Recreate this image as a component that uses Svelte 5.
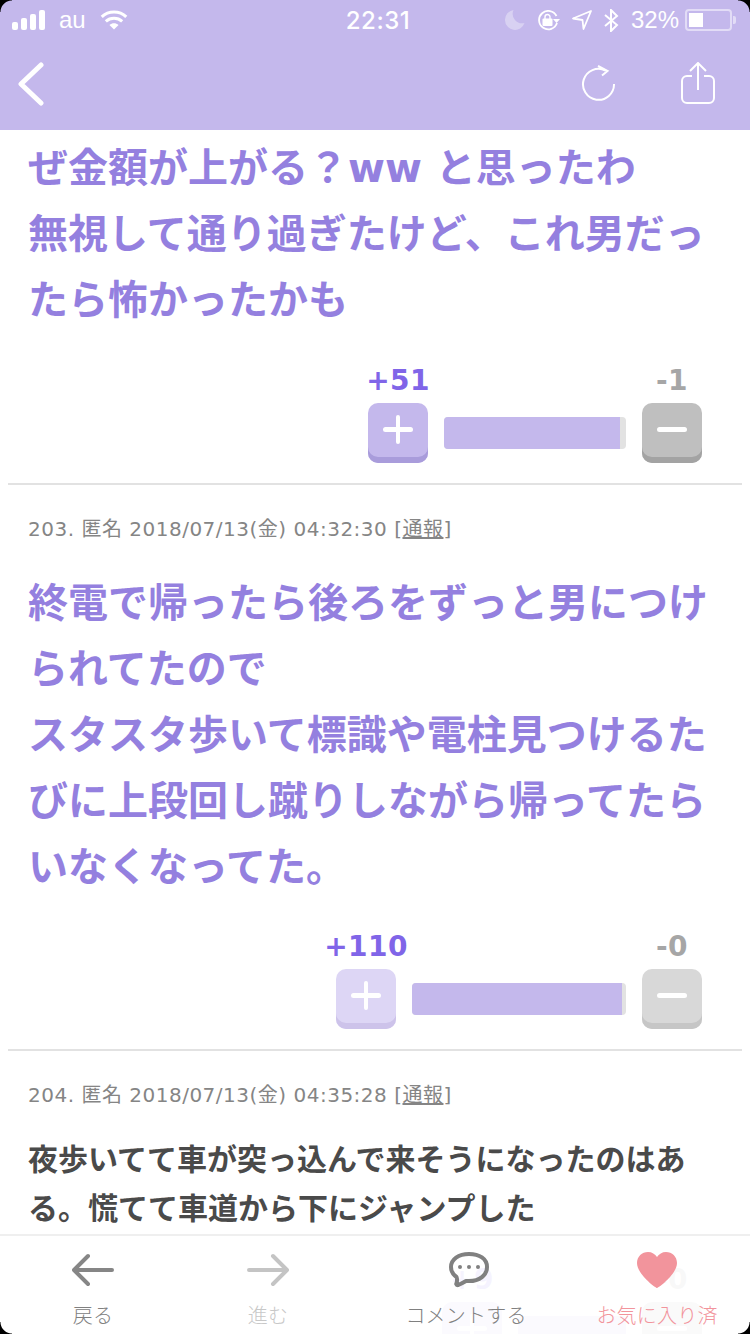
<script>
  const posts = [
    { meta: null, lines: ['ぜ金額が上がる？ww と思ったわ', '無視して通り過ぎたけど、これ男だっ', 'たら怖かったかも'], plus: 51, minus: 1, fill: 96.7, barWidth: 182, muted: false },
    { meta: '203. 匿名 2018/07/13(金) 04:32:30', lines: ['終電で帰ったら後ろをずっと男につけ', 'られてたので', 'スタスタ歩いて標識や電柱見つけるた', 'びに上段回し蹴りしながら帰ってたら', 'いなくなってた。'], plus: 110, minus: 0, fill: 98.2, barWidth: 214, muted: true }
  ];
</script>

<div class="screen">
  <header class="top">
    <div class="status">
      <div class="left">
        <svg class="signal" width="34" height="20" viewBox="0 0 34 20"><rect x="0" y="12" width="6" height="8" rx="2"/><rect x="9" y="8" width="6" height="12" rx="2"/><rect x="18" y="4" width="6" height="16" rx="2"/><rect x="27" y="0" width="6" height="20" rx="2"/></svg>
        <span class="carrier">au</span>
        <svg width="28" height="20" viewBox="0 0 30 22"><path d="M1.500 7.500C9 .5 21 .5 28.500 7.500M6 12.500C11 8 19 8 24 12.500" fill="none" stroke="#fff" stroke-width="3.400"/><path d="M10 16.500C13 14 17 14 20 16.500L15 21.500Z" fill="#fff"/></svg>
      </div>
      <span class="time">22:31</span>
      <div class="right">
        <svg width="20" height="20" viewBox="0 0 20 20"><path d="M8.500 0A10 10 0 1 0 19.500 13 9.500 9.500 0 0 1 8.500 0Z" fill="#fff" opacity=".35"/></svg>
        <svg width="23" height="21" viewBox="0 0 23 21"><path d="M19.500 6A9.200 9.200 0 1 0 20 13" fill="none" stroke="#fff" stroke-width="1.800"/><path d="M16 9h7l-3.500 4Z" fill="#fff"/><rect x="5.500" y="8.500" width="10" height="7.500" rx="1" fill="#fff"/><path d="M8 9V7a2.500 2.500 0 0 1 5 0v2" fill="none" stroke="#fff" stroke-width="1.400"/></svg>
        <svg width="20" height="20" viewBox="0 0 20 20"><path d="M19 1 1 8.500 10.500 10 11.500 19Z" fill="none" stroke="#fff" stroke-width="1.800" stroke-linejoin="round"/></svg>
        <svg width="15" height="23" viewBox="0 0 15 23"><path d="M1 6 13 16 7 22V1L13 7 1 17" fill="none" stroke="#fff" stroke-width="2"/></svg>
        <span class="battery-pct">32%</span>
        <div class="battery"><div class="cell"><div class="charge"></div></div><div class="nub"></div></div>
      </div>
    </div>
    <div class="nav">
      <svg class="back-icon" width="28" height="44" viewBox="0 0 28 44"><path d="M25 3 5 22 25 41" fill="none" stroke="#fff" stroke-width="5" stroke-linecap="round" stroke-linejoin="round"/></svg>
      <div class="nav-actions">
        <svg width="34" height="36" viewBox="0 0 34 36"><path d="M24.500 5.500A15.500 15.500 0 1 0 33 19" fill="none" stroke="#fff" stroke-width="2"/><path d="M17 1 26.500 6 21 10.500" fill="none" stroke="#fff" stroke-width="2"/></svg>
        <svg width="34" height="42" viewBox="0 0 34 42"><path d="M11 14H6a5 5 0 0 0-5 5v17a5 5 0 0 0 5 5h22a5 5 0 0 0 5-5V19a5 5 0 0 0-5-5h-5M17 28V2M9 9l8-8 8 8" fill="none" stroke="#fff" stroke-width="2"/></svg>
      </div>
    </div>
  </header>

  <main class="content">
    {#each posts as p}
      <article class="post">
        {#if p.meta}<p class="meta">{p.meta} [<u>通報</u>]</p>{/if}
        <div class="big">{#each p.lines as l}<div>{l}</div>{/each}</div>
        <div class="votes">
          <div class="col"><b class="plus-n">+{p.plus}</b><div class="btn plus" class:muted={p.muted}><i class="h"></i><i class="v"></i></div></div>
          <div class="bar" style="width:{p.barWidth}px"><div class="fill" style="width:{p.fill}%"></div></div>
          <div class="col"><b class="minus-n">-{p.minus}</b><div class="btn minus" class:muted={p.muted}><i class="h"></i></div></div>
        </div>
      </article>
    {/each}
    <article class="post">
      <p class="meta">204. 匿名 2018/07/13(金) 04:35:28 [<u>通報</u>]</p>
      <div class="small"><div>夜歩いてて車が突っ込んで来そうになったのはあ</div><div>る。慌てて車道から下にジャンプした</div></div>
      <div class="votes">
        <div class="col"><b class="plus-n">+9</b><div class="btn plus"><i class="h"></i><i class="v"></i></div></div>
        <div class="bar" style="width:108px"><div class="fill" style="width:100%"></div></div>
        <div class="col"><b class="minus-n">-0</b><div class="btn minus"><i class="h"></i></div></div>
      </div>
    </article>
  </main>

  <footer class="tabs">
    <div class="tab">
      <svg width="42" height="34" viewBox="0 0 42 34"><path d="M40 17H3M16 3 2 17 16 31" fill="none" stroke="#868686" stroke-width="4" stroke-linecap="round" stroke-linejoin="round"/></svg>
      <span>戻る</span>
    </div>
    <div class="tab fwd">
      <svg width="42" height="34" viewBox="0 0 42 34"><path d="M2 17H39M26 3 40 17 26 31" fill="none" stroke="#c4c4c4" stroke-width="4" stroke-linecap="round" stroke-linejoin="round"/></svg>
      <span>進む</span>
    </div>
    <div class="tab comment">
      <svg width="40" height="36" viewBox="0 0 40 36"><path d="M20 2C9.500 2 2 7.500 2 15c0 4 2 7.500 5.500 10 .8 2 .8 4.500-.3 7 .4 1 1 1.300 1.800 1 3-1 5.500-2.500 8-4 1 .1 2 .1 3 .1 10.500 0 18-6 18-14.100S30.500 2 20 2Z" fill="none" stroke="#808080" stroke-width="4" stroke-linejoin="round"/><circle cx="11" cy="15" r="2" fill="#808080"/><circle cx="20" cy="15" r="2" fill="#808080"/><circle cx="29" cy="15" r="2" fill="#808080"/></svg>
      <span>コメントする</span>
    </div>
    <div class="tab fav">
      <svg width="40" height="36" viewBox="0 0 40 36"><path d="M20 36C18.500 36 0 22 0 11 0 4.500 5 0 11 0c4 0 7 2 9 5 2-3 5-5 9-5 6 0 11 4.500 11 11C40 22 21.500 36 20 36Z" fill="#f2949c"/></svg>
      <span>お気に入り済</span>
    </div>
  </footer>

  <i class="corner tl"></i><i class="corner tr"></i><i class="corner bl"></i><i class="corner br"></i>
</div>

<style>
  :global(body) { margin: 0; background: #fff; }
  .screen { position: relative; width: 750px; height: 1334px; overflow: hidden; display: flex; flex-direction: column; background: #fff; font-family: "Liberation Sans", "Noto Sans CJK JP", sans-serif; }
  .top { flex: none; height: 130px; background: #c4b8ec; color: #fff; display: flex; flex-direction: column; }
  .status { height: 40px; display: flex; align-items: center; justify-content: space-between; padding: 0 14px 0 12px; position: relative; }
  .left, .right { display: flex; align-items: center; }
  .signal { fill: #fff; margin-right: 13px; }
  .carrier { font-size: 24px; margin-right: 14px; }
  .time { position: absolute; left: 6px; right: 0; text-align: center; font-size: 24px; font-weight: 500; font-family: "Inter", sans-serif; letter-spacing: .5px; }
  .right { gap: 12px; }
  .battery-pct { font-size: 24px; }
  .battery { display: flex; align-items: center; margin-left: -6px; }
  .cell { width: 47px; height: 22px; border: 2px solid rgba(255,255,255,.5); border-radius: 4px; padding: 2px; box-sizing: border-box; }
  .charge { width: 14px; height: 100%; background: #fff; }
  .nub { width: 3px; height: 8px; background: rgba(255,255,255,.5); margin-left: 1px; border-radius: 0 2px 2px 0; }
  .nav { flex: 1; display: flex; align-items: center; justify-content: space-between; padding: 0 35px 4px 16px; }
  .back-icon { margin-top: 2px; }
  .nav-actions { display: flex; align-items: center; gap: 66px; }
  .content { flex: 1; min-height: 0; overflow: hidden; }
  .post { margin: 0 8px; padding: 0 20px; border-bottom: 2px solid #e2e2e2; }
  .meta { margin: 0; padding-top: 30px; font-size: 20px; line-height: 28px; letter-spacing: .5px; color: #858585; font-family: "DejaVu Sans", "Noto Sans CJK JP", sans-serif; }
  .big { font-family: "DejaVu Sans", "Noto Sans CJK JP", sans-serif; font-weight: 700; font-size: 40px; line-height: 66px; color: #9480df; white-space: nowrap; }
  .post:first-child .big { margin-top: 5px; }
  .post:not(:first-child) .big { margin-top: 27px; }
  .small { font-family: "DejaVu Sans", "Noto Sans CJK JP", sans-serif; font-weight: 700; font-size: 30px; line-height: 49px; color: #4a4a4a; margin-top: 26px; white-space: nowrap; }
  .votes { display: flex; justify-content: flex-end; align-items: flex-end; gap: 16px; margin-top: 27px; margin-right: 20px; padding-bottom: 20px; }
  .post:first-child .votes { margin-top: 28px; }
  .col { width: 60px; display: flex; flex-direction: column; align-items: center; gap: 2px; }
  .col b { font-family: "DejaVu Sans", sans-serif; font-size: 28px; line-height: 40px; letter-spacing: .4px; white-space: nowrap; }
  .plus-n { color: #8065e8; }
  .minus-n { color: #a6a6a6; }
  .btn { position: relative; width: 60px; height: 60px; border-radius: 10px; box-sizing: border-box; }
  .plus { background: #c4b8ec; box-shadow: inset 0 -6px 0 #a99cdb; }
  .minus { background: #bfbfbf; box-shadow: inset 0 -6px 0 #a3a3a3; }
  .plus.muted { background: #ddd6f5; box-shadow: inset 0 -6px 0 #cdc3ea; }
  .minus.muted { background: #d8d8d8; box-shadow: inset 0 -6px 0 #c6c6c6; }
  .btn i { position: absolute; background: #fff; border-radius: 3px; }
  .h { left: 15px; top: 24px; width: 30px; height: 5px; }
  .v { left: 28px; top: 12px; width: 4px; height: 29px; }
  .bar { height: 32px; margin-bottom: 14px; background: #e2e2e2; border-radius: 4px; overflow: hidden; }
  .fill { height: 100%; background: #c4b8ec; }
  .tabs { position: absolute; left: 0; right: 0; bottom: 0; height: 100px; box-sizing: border-box; border-top: 2px solid #efefef; background: rgba(255,255,255,.92); display: grid; grid-template-columns: 186px 164px 232px 150px; }
  .tab { display: flex; flex-direction: column; align-items: center; padding-top: 16px; font-family: "Noto Sans CJK JP", sans-serif; font-size: 20px; font-weight: 300; color: #808080; white-space: nowrap; }
  .tab svg { height: 36px; margin-bottom: 12px; }
  .tab span { line-height: 30px; letter-spacing: .2px; }
  .comment svg { margin-left: 6px; }
  .fwd { color: #c8c8c8; }
  .fav { color: #f2949c; }
  .corner { position: absolute; width: 12px; height: 12px; background: radial-gradient(circle at var(--c), transparent 11px, #000 12px); }
  .tl { top: 0; left: 0; --c: 100% 100%; }
  .tr { top: 0; right: 0; --c: 0 100%; }
  .bl { bottom: 0; left: 0; --c: 100% 0; }
  .br { bottom: 0; right: 0; --c: 0 0; }
</style>
